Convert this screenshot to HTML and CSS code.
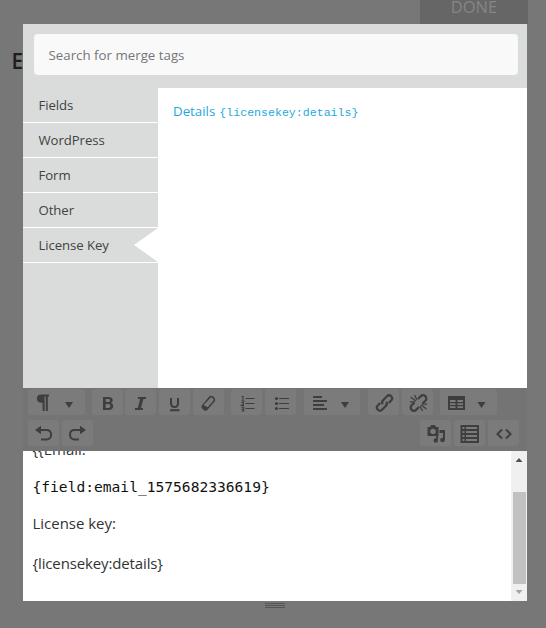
FILE: index.html
```
<!DOCTYPE html>
<html lang="en">
<head>
<meta charset="utf-8">
<title>Merge tags</title>
<link rel="stylesheet" href="styles.css">
</head>
<body>
<header class="top"><div class="done"><span>DONE</span></div></header>
<main class="panel">
  <span class="behind">E</span>
  <section class="merge">
    <div class="search"><span>Search for merge tags</span></div>
    <div class="columns">
      <ul class="cats">
        <li><span>Fields</span></li>
        <li><span>WordPress</span></li>
        <li><span>Form</span></li>
        <li><span>Other</span></li>
        <li class="active"><span>License Key</span></li>
      </ul>
      <div class="tags"><a><span>Details</span><code>{licensekey:details}</code></a></div>
    </div>
  </section>
  <div class="toolbar">
    <div class="row">
      <div class="group"><button class="wide">
        <svg width="56" height="26" viewBox="0 0 56 26"><path d="M13 5.500H21v2h-1.200v14.500h-2V7.500h-1.200v14.500h-2v-8.300H13a4.100 4.100 0 0 1 0-8.200z"/><path d="M37 13h8l-4 6z"/></svg></button></div>
      <div class="group">
        <button><svg width="31" height="26" viewBox="0 0 31 26"><path fill-rule="evenodd" d="M11 8h5.500c2.800 0 4.200 1.200 4.200 3.200 0 1.400-.7 2.300-1.800 2.800 1.500.4 2.300 1.500 2.300 3 0 2.600-1.800 4-4.700 4H11zM13.700 10v3h2.300c1.300 0 2-.5 2-1.500s-.7-1.500-2-1.500zm0 5v3.900h2.600c1.400 0 2.100-.7 2.100-1.900 0-1.300-.7-2-2.200-2z"/></svg></button>
        <button><svg width="31" height="26" viewBox="0 0 31 26"><path d="M13 8h8v2h-2.600l-2.500 9H18v2h-8v-2h2.700l2.500-9H13z"/></svg></button>
        <button><svg width="31" height="26" viewBox="0 0 31 26"><path class="line" d="M12 9v5c0 2.600 1.200 4 3.500 4s3.500-1.400 3.500-4V9M11 21.300h9.500"/></svg></button>
        <button><svg width="31" height="26" viewBox="0 0 31 26"><path fill-rule="evenodd" d="M8.800 16.500 16 7.800c1-1.300 2.300-1.500 3.700-.6 2.400 1.200 2.700 2.600 2.300 4.800L14.500 20.800c-1 1.300-2.500 1.300-3.800.2-2-1.600-2.800-3-1.900-4.500zm1.800-.6 4 2.300 5.500-6.300c.8-1 .6-2-.5-2.800-1.100-.8-2-.7-2.800.3z"/></svg></button>
      </div>
      <div class="group">
        <button><svg width="31" height="26" viewBox="0 0 31 26"><path class="hair" d="M14.500 9.500h9M14.500 14.500h9M14.500 19.500h9M10.500 7.500h1.500V12M10.500 12h3M10.500 13.500h2v1.500l-2 1.500h2.500M10.500 18.200h2.200V22h-2.200m0-1.800h2"/></svg></button>
        <button><svg width="31" height="26" viewBox="0 0 31 26"><path class="hair" d="M14 9.500h10M14 14.500h10M14 19.500h10"/><circle cx="11.500" cy="9.500" r="1.600"/><circle cx="11.500" cy="14.500" r="1.600"/><circle cx="11.500" cy="19.500" r="1.600"/></svg></button>
      </div>
      <div class="group"><button class="wide"><svg width="56" height="26" viewBox="0 0 56 26"><path d="M9 7h9v2H9zM9 11h14v2H9zM9 15h11v2H9zM9 19h14v2H9zM37 13h8l-4 6z"/></svg></button></div>
      <div class="group">
        <button><svg width="31" height="26" viewBox="0 0 31 26"><g transform="translate(16.500 14) rotate(-45)"><path class="line heavy" d="M3 3h3.500a3 3 0 0 0 0-6H1a3 3 0 0 0-3 2.600M-3-3h-3.500a3 3 0 0 0 0 6H-1a3 3 0 0 0 3-2.600"/></g></svg></button>
        <button><svg width="31" height="26" viewBox="0 0 31 26"><g transform="translate(16.500 14) rotate(-45)"><path class="line heavy" d="M2.500 3.200h4a3.200 3.200 0 0 0 0-6.400H2.500M-2.500-3.200h-4a3.200 3.200 0 0 0 0 6.400H-2.500"/></g><path class="hair bold" d="M8.500 8l5.500 4M12.500 6l2.500 5M8 12.800h5M24.500 20l-5.500-4M20.500 22l-2.500-5M25 15.200h-5"/></svg></button>
      </div>
      <div class="group"><button class="wide"><svg width="56" height="26" viewBox="0 0 56 26"><path fill-rule="evenodd" d="M8 7h17v14H8zm2 4v2h5.500v-2zm7.500 0v2H23v-2zM10 14.200v1.800h5.500v-1.800zm7.500 0v1.800H23v-1.800zM10 17.300V19h5.500v-1.700zm7.500 0V19H23v-1.700zM37.500 13h8l-4 6z"/></svg></button></div>
    </div>
    <div class="row second">
      <div class="group">
        <button><svg width="31" height="26" viewBox="0 0 31 26"><path class="line" d="M10 10h8.500c2.800 0 4.600 2 4.600 4.700s-1.800 4.800-4.600 4.800H13"/><path d="M7 10 13 5.800v8.400z"/></svg></button>
        <button><svg width="31" height="26" viewBox="0 0 31 26"><path class="line" d="M21 10h-8.500C9.700 10 8 12 8 14.700s1.700 4.800 4.500 4.800H17"/><path d="M24 10 18 5.800v8.400z"/></svg></button>
      </div>
      <div class="group">
        <button><svg width="31" height="26" viewBox="0 0 31 26"><path fill-rule="evenodd" d="M7.500 7H10l1-2h4l1 2h2.500v9h-11zm5.500 1.700a2.700 2.700 0 1 0 0 5.400 2.700 2.700 0 0 0 0-5.400zM19.500 10H25v10h-2v-7h-3.500z"/><circle cx="22.500" cy="20" r="2.300"/><circle cx="15.800" cy="20.500" r="2.200"/><path d="M16.200 15.500h1.800v5h-1.800z"/></svg></button>
        <button><svg width="31" height="26" viewBox="0 0 31 26"><path fill-rule="evenodd" d="M6.500 5h18.500v18H6.500zm2 2v2h2V7zm3.500 0v2h11V7zM8.500 11v2h2v-2zm3.500 0v2h11v-2zM8.500 15v2h2v-2zm3.500 0v2h11v-2zM8.500 19v2h2v-2zm3.500 0v2h11v-2z"/></svg></button>
        <button><svg width="31" height="26" viewBox="0 0 31 26"><path class="line" d="M14 9.500 9.500 14l4.500 4.500M18 9.500l4.500 4.500-4.500 4.500"/></svg></button>
      </div>
    </div>
  </div>
  <div class="editor">
    <div class="content">
      <p>{{Email:</p>
      <p class="mono">{field:email_1575682336619}</p>
      <p>License key:</p>
      <p class="last">{licensekey:details}</p>
    </div>
    <div class="scroll"><i class="up"></i><b></b><i class="down"></i></div>
  </div>
  <div class="grip"><i></i><i></i><i></i></div>
</main>
</body>
</html>
```
FILE: styles.css
```
* { box-sizing: border-box; }
body { margin: 0; height: 628px; background: #777; overflow: hidden; font-family: "Open Sans", "Noto Sans", sans-serif; color: #424242; }
.top { height: 24px; padding-right: 18px; display: flex; justify-content: flex-end; }
.done { width: 108px; background: #666; color: #858585; text-align: center; font-size: 16.500px; line-height: 13px; }
.panel { position: relative; width: 504px; margin-left: 23px; }
.behind { position: absolute; left: -11.500px; top: 23px; z-index: -1; font-size: 21px; line-height: 28px; font-weight: 600; color: #1d1d1d; }
.merge { height: 364px; background: #dadcdb; padding-top: 10px; }
.search { height: 41px; margin: 0 9px 13px 11px; padding-left: 14.500px; background: #f9f9f9; border-radius: 4px; font-size: 13.3px; line-height: 42px; color: #767676; }
.columns { display: flex; height: 300px; }
.cats { width: 135px; margin: 0; padding: 0; list-style: none; font-size: 13.2px; }
.cats li { height: 35px; line-height: 34px; padding-left: 15.500px; border-bottom: 1px solid #fff; display: flex; justify-content: space-between; letter-spacing: -0.08px; }
.active::after { content: ""; width: 24px; height: 34px; background: #fff; clip-path: polygon(100% 0, 0 50%, 100% 100%); }
.tags { flex: 1; background: #fff; padding: 13px 15px; color: #1ea9dc; font-size: 13.3px; line-height: 20px; }
code { font-family: "Liberation Mono", monospace; font-size: 11.6px; margin-left: 4px; }
.toolbar { height: 63px; padding: 1px 5px 0; background: #747474; }
.row { display: flex; gap: 7.200px; }
.second { margin-top: 5px; justify-content: space-between; padding-right: 3px; }
.group { display: flex; gap: 2.800px; }
button { width: 31px; height: 26px; padding: 0; border: 0; border-radius: 3px; background: #7b7b7b; }
.wide { width: 56.500px; }
.row:not(.second) { margin-right: -2px; }
.row:not(.second) .group:nth-child(n+4) { margin-left: .4px; }
svg { display: block; fill: #3e3e3e; }
.line { fill: none; stroke: #3e3e3e; stroke-width: 2; }
.heavy { stroke-width: 2.200; }
.hair { fill: none; stroke: #3e3e3e; stroke-width: 1.1; }
.bold { stroke-width: 1.300; }
.editor { display: flex; height: 150px; background: #fff; overflow: hidden; color: #333; }
.content { flex: 1; padding-left: 9.500px; }
.content p { margin: 0 0 13px; font-size: 15px; line-height: 27px; height: 27px; white-space: nowrap; letter-spacing: -0.02px; }
.content .last { letter-spacing: -0.13px; }
.content p:first-child { margin-top: -15px; margin-bottom: 9.500px; }
.content .mono { font-family: "DejaVu Sans Mono", monospace; font-size: 14.600px; letter-spacing: 0; margin-bottom: 10.500px; color: #111; }
.scroll { width: 16px; background: #f0f0f0; display: flex; flex-direction: column; align-items: center; }
.scroll b { width: 13px; height: 92px; margin-top: 30px; background: #c1c1c1; }
.up { width: 7px; height: 4px; margin-top: 7px; background: #505050; clip-path: polygon(50% 0, 100% 100%, 0 100%); }
.down { width: 7px; height: 4px; margin-top: 6px; background: #a3a3a3; clip-path: polygon(0 0, 100% 0, 50% 100%); }
.grip { width: 20px; margin: 2px auto 0; display: flex; flex-direction: column; gap: 1px; }
.grip i { height: 1px; background: #555; }
```
